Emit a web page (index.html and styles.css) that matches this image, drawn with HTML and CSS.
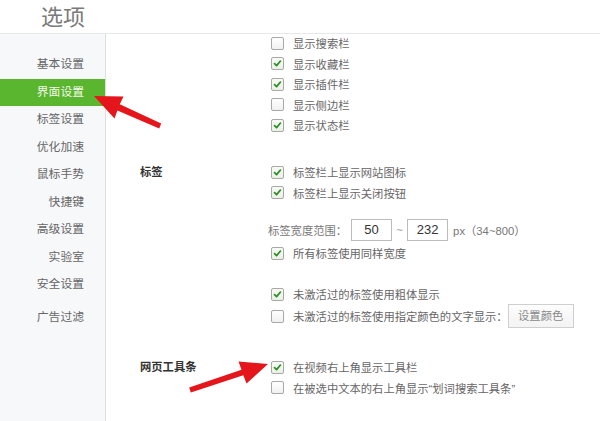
FILE: index.html
```html
<!DOCTYPE html>
<html lang="zh-CN">
<head>
<meta charset="utf-8">
<title>选项</title>
<link rel="stylesheet" href="styles.css">
</head>
<body>
<div class="page">
  <header class="header"><h1 class="title">选项</h1></header>
  <div class="main">
    <nav class="sidebar">
      <div class="nav-item">基本设置</div>
      <div class="nav-item active">界面设置</div>
      <div class="nav-item">标签设置</div>
      <div class="nav-item">优化加速</div>
      <div class="nav-item">鼠标手势</div>
      <div class="nav-item">快捷键</div>
      <div class="nav-item">高级设置</div>
      <div class="nav-item">实验室</div>
      <div class="nav-item">安全设置</div>
      <div class="nav-item extra">广告过滤</div>
    </nav>
    <div class="content">
      <section class="group g1">
        <div class="label"></div>
        <div class="options">
          <div class="opt"><span class="cb"></span>显示搜索栏</div>
          <div class="opt"><span class="cb on"><svg viewBox="0 0 13 13"><path d="M3 6.6 L5.4 9 L10 3.6"/></svg></span>显示收藏栏</div>
          <div class="opt"><span class="cb on"><svg viewBox="0 0 13 13"><path d="M3 6.6 L5.4 9 L10 3.6"/></svg></span>显示插件栏</div>
          <div class="opt"><span class="cb"></span>显示侧边栏</div>
          <div class="opt"><span class="cb on"><svg viewBox="0 0 13 13"><path d="M3 6.6 L5.4 9 L10 3.6"/></svg></span>显示状态栏</div>
        </div>
      </section>
      <section class="group g2">
        <div class="label">标签</div>
        <div class="options">
          <div class="opt"><span class="cb on"><svg viewBox="0 0 13 13"><path d="M3 6.6 L5.4 9 L10 3.6"/></svg></span>标签栏上显示网站图标</div>
          <div class="opt"><span class="cb on"><svg viewBox="0 0 13 13"><path d="M3 6.6 L5.4 9 L10 3.6"/></svg></span>标签栏上显示关闭按钮</div>
          <div class="width-row">
            <span class="wlabel">标签宽度范围：</span>
            <span class="num">50</span>
            <span class="tilde">~</span>
            <span class="num">232</span>
            <span class="unit">px（34~800）</span>
          </div>
          <div class="opt tight"><span class="cb on"><svg viewBox="0 0 13 13"><path d="M3 6.6 L5.4 9 L10 3.6"/></svg></span>所有标签使用同样宽度</div>
          <div class="opt spaced"><span class="cb on"><svg viewBox="0 0 13 13"><path d="M3 6.6 L5.4 9 L10 3.6"/></svg></span>未激活过的标签使用粗体显示</div>
          <div class="opt tall"><span class="cb"></span>未激活过的标签使用指定颜色的文字显示：<span class="btn">设置颜色</span></div>
        </div>
      </section>
      <section class="group g3">
        <div class="label">网页工具条</div>
        <div class="options">
          <div class="opt"><span class="cb on"><svg viewBox="0 0 13 13"><path d="M3 6.6 L5.4 9 L10 3.6"/></svg></span>在视频右上角显示工具栏</div>
          <div class="opt"><span class="cb"></span>在被选中文本的右上角显示“划词搜索工具条”</div>
        </div>
      </section>
    </div>
  </div>
  <svg class="annot" viewBox="0 0 600 421" width="600" height="421">
    <polygon class="arrow" points="94,96 123.5,96.5 119.8,104.3 161.2,123.6 159.2,128.4 117.4,110.6 114.5,118.5"/>
    <polygon class="arrow" points="268,364 246.5,383.5 243.3,375.3 190.8,392.4 189.2,387.6 241.5,369.7 238.5,361.5"/>
  </svg>
</div>
</body>
</html>
```

FILE: styles.css
```css
* { box-sizing: border-box; }

html, body {
  margin: 0;
  padding: 0;
  background: #fff;
}

body {
  font-family: "Liberation Sans", "Noto Sans CJK SC", sans-serif;
  font-size: 11.3px;
  color: #666;
}

.page {
  position: relative;
  width: 600px;
  height: 421px;
  overflow: hidden;
}

.header {
  height: 34px;
  border-bottom: 1px solid #e6e8ea;
  padding-left: 41px;
}

.title {
  margin: 0;
  font-family: "Noto Sans CJK SC", sans-serif;
  font-size: 22px;
  font-weight: 400;
  line-height: 30px;
  color: #7a7a7a;
}

.main {
  display: flex;
  height: 387px;
}

.sidebar {
  width: 106px;
  flex: none;
  background: #f6f8fa;
  border-right: 1px solid #dcdfe2;
  padding-top: 17px;
}

.nav-item {
  height: 27.5px;
  line-height: 27.5px;
  text-align: right;
  padding-right: 21px;
  color: #666;
  font-size: 11.8px;
}

.nav-item.active {
  background: #5ab52f;
  color: #f4f8e8;
}

.nav-item.extra {
  margin-top: 5px;
}

.content {
  flex: 1;
  padding-left: 34px;
}

.group {
  display: flex;
}

.g1 { margin-top: -1px; }
.g2 { margin-top: 26.25px; }
.g3 { margin-top: 28.5px; }

.label {
  width: 130px;
  flex: none;
  line-height: 20.5px;
  font-weight: 700;
  color: #333;
}

.options {
  display: flex;
  flex-direction: column;
}

.opt {
  display: flex;
  align-items: center;
  height: 20.5px;
  white-space: nowrap;
  color: #666;
}

.opt.tight { margin-top: 1px; }
.opt.spaced { margin-top: 20.5px; }
.opt.tall { height: 24px; }

.cb {
  width: 13px;
  height: 13px;
  flex: none;
  margin-left: 1px;
  margin-right: 9px;
  border: 1px solid #a8a8a8;
  border-radius: 2px;
  background: linear-gradient(#ffffff, #f1f1f1);
  display: flex;
  align-items: center;
  justify-content: center;
}

.cb.on {
  background: linear-gradient(#f7fbf4, #e9f2e4);
}

.cb svg {
  width: 11px;
  height: 11px;
}

.cb svg path {
  fill: none;
  stroke: #2f8a28;
  stroke-width: 2;
  stroke-linecap: round;
  stroke-linejoin: round;
}

.width-row {
  display: flex;
  align-items: center;
  height: 24px;
  margin-top: 15px;
  margin-left: -2px;
  white-space: nowrap;
  color: #777;
}

.wlabel { margin-right: 4px; }

.num {
  width: 41px;
  height: 22px;
  border: 1px solid #bcbcbc;
  background: #fff;
  text-align: center;
  line-height: 20px;
  font-size: 13px;
  color: #333;
}

.tilde {
  width: 15px;
  text-align: center;
  color: #999;
}

.unit {
  margin-left: 5px;
  color: #777;
}

.btn {
  width: 66px;
  height: 24px;
  border: 1px solid #cfcfcf;
  background: linear-gradient(#fdfdfd, #f3f3f3);
  color: #888;
  text-align: center;
  line-height: 22px;
}

.annot {
  position: absolute;
  top: 0;
  left: 0;
  pointer-events: none;
}

.arrow {
  fill: #e5161b;
}
```
